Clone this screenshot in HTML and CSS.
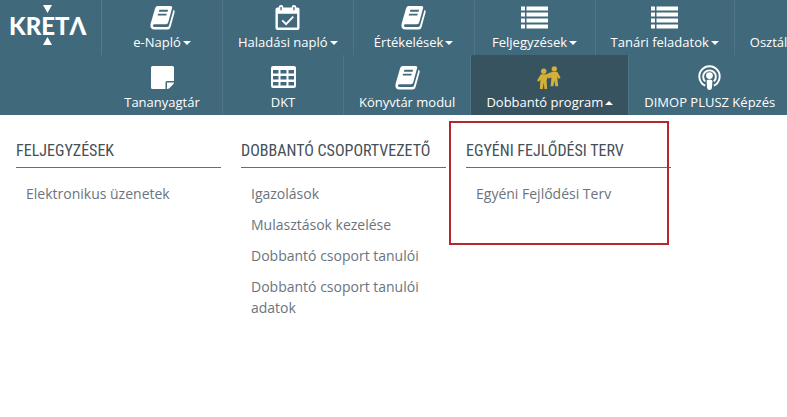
FILE: index.html
```html
<!DOCTYPE html>
<html lang="hu">
<head>
  <meta charset="UTF-8">
  <meta name="viewport" content="width=device-width, initial-scale=1.0">
  <title>KRÉTA</title>
  <link rel="stylesheet" href="styles.css">
</head>
<body>

  <!-- Shared icons -->
  <svg class="sprite" aria-hidden="true">
    <symbol id="icon-book" viewBox="0 0 26 26">
      <path fill="currentColor" fill-rule="evenodd" d="M8 1h13q2.500 0 2 2L19 18q-.5 2-2.500 2H5q-2 0-2 1.500T5 23h12.500q1.700 0 2.200-1.500L24.500 5q1.600.7 1.100 2.500L21.500 22.500q-.7 3-3 3H4.500Q0 25.500.5 20L5 4.500Q5.800 1 8 1zM9.800 5l-.6 2h9l.6-2zM8.500 9l-.6 2h9l.6-2z"/>
    </symbol>
    <symbol id="icon-calendar" viewBox="0 0 26 26">
      <path fill="currentColor" fill-rule="evenodd" d="M2.500 2.500H4V2q0-2 2.300-2t2.300 2v.5h8.800V2q0-2 2.300-2T22 2v.5h1.500q2 0 2 2V24q0 2-2 2h-21q-2 0-2-2V4.500q0-2 2-2zM5.600 2v3.500H7V2zm13.400 0v3.500h1.400V2zM3 9v14.500h20V9z"/>
      <path fill="none" stroke="currentColor" stroke-width="2" d="M7.500 16l4 4 7.500-8"/>
    </symbol>
    <symbol id="icon-list" viewBox="0 0 27 22">
      <path fill="currentColor" d="M0 0h4v4H0zm5.500 0H27v4H5.500zM0 6h4v4H0zm5.500 0H27v4H5.500zM0 12h4v4H0zm5.500 0H27v4H5.500zM0 18h4v4H0zm5.500 0H27v4H5.500z"/>
    </symbol>
    <symbol id="icon-note" viewBox="0 0 25 25">
      <path fill="currentColor" d="M2.500 1h20q1.500 0 1.500 1.500V16h-7q-1.500 0-1.500 1.500V24h-13Q1 24 1 22.500v-20Q1 1 2.500 1zM17 17.500h7q0 1-1 2L19.500 23q-1 1-2.500 1z"/>
    </symbol>
    <symbol id="icon-table" viewBox="-1 -1 27 25">
      <path fill="currentColor" fill-rule="evenodd" d="M2 0h21q2 0 2 2v18q0 2-2 2H2q-2 0-2-2V2q0-2 2-2zM2 4v3.500h5.500V4zm7.500 0v3.500h6V4zm8 0v3.500H23V4zM2 10v3.500h5.500V10zm7.500 0v3.500h6V10zm8 0v3.500H23V10zM2 16v3.500h5.500V16zm7.500 0v3.500h6V16zm8 0v3.500H23V16z"/>
    </symbol>
    <symbol id="icon-podcast" viewBox="0 0 24 26">
      <g fill="none" stroke="currentColor" stroke-width="2">
        <path d="M7.500 21.500a10.600 10.600 0 1 1 9 0"/>
        <path d="M7.500 17a6.600 6.600 0 1 1 9 0"/>
      </g>
      <circle cx="12" cy="11" r="3.500" fill="currentColor"/>
      <path fill="currentColor" d="M9 17q0-2 3-2t3 2l-.5 7q-.2 2-2.500 2t-2.500-2z"/>
    </symbol>
    <symbol id="icon-people" viewBox="0 -1 26 26">
      <g fill="currentColor">
        <circle cx="7" cy="5.500" r="2.800"/>
        <path d="M4 8.500h6l4-2 1 2-4 3.500-1 3 .5 9H7.800L7 17.500 6 24H3l.5-10L2 16.500 0 15z"/>
        <circle cx="18" cy="3" r="2.800"/>
        <path d="M15 6h6l3.500 6-2 1.500L21 11l1 10h-3l-.8-6-1.200 6h-2.800L15 12l-3 1-1-2 3-1.500z"/>
      </g>
    </symbol>
  </svg>

  <header class="header">
    <a class="brand" href="#" aria-label="KRÉTA">
      <svg class="logo" viewBox="0 0 80 42">
        <text class="logo-text" x="-1" y="31">KRETΛ</text>
        <path fill="#fff" d="M33 1h9l-4.500 8zM33 41h9l-4.500-8z"/>
      </svg>
    </a>

    <nav class="menu">
      <div class="menu-row menu-row-top">
        <button type="button" class="menu-item">
          <svg class="icon"><use href="#icon-book"/></svg>
          <span class="menu-label">e-Napló<i class="caret"></i></span>
        </button>
        <button type="button" class="menu-item">
          <svg class="icon"><use href="#icon-calendar"/></svg>
          <span class="menu-label">Haladási napló<i class="caret"></i></span>
        </button>
        <button type="button" class="menu-item">
          <svg class="icon"><use href="#icon-book"/></svg>
          <span class="menu-label">Értékelések<i class="caret"></i></span>
        </button>
        <button type="button" class="menu-item">
          <svg class="icon"><use href="#icon-list"/></svg>
          <span class="menu-label">Feljegyzések<i class="caret"></i></span>
        </button>
        <button type="button" class="menu-item">
          <svg class="icon"><use href="#icon-list"/></svg>
          <span class="menu-label">Tanári feladatok<i class="caret"></i></span>
        </button>
        <button type="button" class="menu-item">
          <svg class="icon"><use href="#icon-list"/></svg>
          <span class="menu-label">Osztályfőnöki feladatok<i class="caret"></i></span>
        </button>
      </div>
      <div class="menu-row">
        <a href="#" class="menu-item">
          <svg class="icon"><use href="#icon-note"/></svg>
          <span class="menu-label">Tananyagtár</span>
        </a>
        <a href="#" class="menu-item">
          <svg class="icon"><use href="#icon-table"/></svg>
          <span class="menu-label">DKT</span>
        </a>
        <a href="#" class="menu-item">
          <svg class="icon"><use href="#icon-book"/></svg>
          <span class="menu-label">Könyvtár modul</span>
        </a>
        <button type="button" class="menu-item active" aria-expanded="true">
          <svg class="icon icon-gold"><use href="#icon-people"/></svg>
          <span class="menu-label">Dobbantó program<i class="caret caret-up"></i></span>
        </button>
        <a href="#" class="menu-item">
          <svg class="icon"><use href="#icon-podcast"/></svg>
          <span class="menu-label">DIMOP PLUSZ Képzés</span>
        </a>
      </div>
    </nav>
  </header>

  <main class="submenu">
    <section class="submenu-group">
      <h2>Feljegyzések</h2>
      <ul>
        <li><a href="#">Elektronikus üzenetek</a></li>
      </ul>
    </section>
    <section class="submenu-group">
      <h2>Dobbantó csoportvezető</h2>
      <ul>
        <li><a href="#">Igazolások</a></li>
        <li><a href="#">Mulasztások kezelése</a></li>
        <li><a href="#">Dobbantó csoport tanulói</a></li>
        <li><a href="#">Dobbantó csoport tanulói adatok</a></li>
      </ul>
    </section>
    <section class="submenu-group highlighted">
      <h2>Egyéni Fejlődési Terv</h2>
      <ul>
        <li><a href="#">Egyéni Fejlődési Terv</a></li>
      </ul>
    </section>
  </main>

</body>
</html>
```
FILE: styles.css
```css
* {
  box-sizing: border-box;
}
body {
  margin: 0;
  background-color: #fff;
  font-family: "Open Sans", sans-serif;
  font-size: 14px;
  color: #6a7480;
}
.sprite {
  display: none;
}

/* Header */
.header {
  display: flex;
  align-items: flex-start;
  background-color: #41697c;
  overflow: hidden;
}
.brand {
  flex: none;
  width: 102px;
  height: 55px;
  padding: 4px 0 0 10px;
  border-right: 1px solid #557b8c;
}
.logo {
  display: block;
  width: 80px;
  height: 42px;
  overflow: visible;
}
.logo-text {
  font-family: Lato, sans-serif;
  font-size: 24px;
  font-weight: 900;
  fill: #fff;
}
.menu {
  flex: 1;
  min-width: 0;
}
.menu-row {
  display: flex;
}
.menu-item {
  flex: none;
  display: flex;
  flex-direction: column;
  align-items: center;
  gap: 3px;
  min-width: 121px;
  height: 60px;
  padding: 10px 15px 0;
  border: 0;
  border-right: 1px solid #4e7688;
  background: none;
  color: #fff;
  font-family: inherit;
  font-size: 13px;
  line-height: 18px;
  text-decoration: none;
  white-space: nowrap;
  cursor: pointer;
}
.menu-row-top .menu-item {
  height: 55px;
  padding-top: 5px;
}
.menu-item.active {
  background-color: #37535f;
}
.icon {
  width: 27px;
  height: 25px;
}
.icon-gold {
  color: #d3b03a;
}
.caret {
  display: inline-block;
  margin-left: 2px;
  vertical-align: 2px;
  border: 4px solid transparent;
  border-top-color: #fff;
  border-bottom: 0;
}
.caret-up {
  border-top: 0;
  border-bottom: 4px solid #fff;
}

/* Open submenu */
.submenu {
  display: grid;
  grid-template-columns: repeat(auto-fill, 205px);
  gap: 20px;
  padding: 24px 16px;
}
.submenu-group {
  position: relative;
}
.submenu-group h2 {
  margin: 0 0 15px;
  padding-bottom: 5px;
  border-bottom: 1px solid #bf4a3e;
  color: #454f58;
  font-family: "Roboto Condensed", "Liberation Sans Narrow", Roboto, sans-serif;
  font-size: 16px;
  font-weight: normal;
  line-height: 23px;
  text-transform: uppercase;
  white-space: nowrap;
}
.submenu-group ul {
  margin: 0;
  padding: 0 10px;
  list-style: none;
}
.submenu-group li {
  margin-bottom: 10px;
  line-height: 21px;
}
.submenu-group a {
  color: inherit;
  text-decoration: none;
}
.highlighted::after {
  content: "";
  position: absolute;
  top: -18px;
  left: -17px;
  width: 216px;
  height: 120px;
  border: 2px solid #b3282d;
  pointer-events: none;
}
```
